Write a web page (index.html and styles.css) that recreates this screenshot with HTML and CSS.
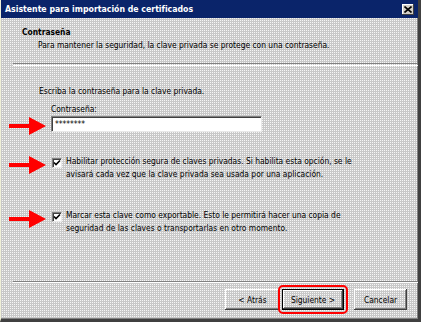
FILE: index.html
```html
<!DOCTYPE html>
<html lang="es">
<head>
    <meta charset="UTF-8">
    <title>Asistente para importación de certificados</title>
    <link rel="stylesheet" href="styles.css">
</head>
<body>
    <div class="window">
        <div class="titlebar">
            <span class="title">Asistente para importación de certificados</span>
            <span class="close">
                <svg width="8" height="7" viewBox="0 0 8 7"><path d="M0.5 0.5 L7.5 6.5 M7.5 0.5 L0.5 6.5" stroke="#000" stroke-width="1.6"/></svg>
            </span>
        </div>

        <div class="header">
            <div class="heading">Contraseña</div>
            <div class="subtitle">Para mantener la seguridad, la clave privada se protege con una contraseña.</div>
        </div>
        <div class="separator"></div>

        <div class="content">
            <p class="intro">Escriba la contraseña para la clave privada.</p>

            <label class="field-label" for="password">Contraseña:</label>
            <div class="row">
                <svg class="arrow" width="37" height="18" viewBox="0 0 37 18"><polygon points="0,7 20,7 20,0 37,9 20,18 20,11 0,11" fill="#f00"/></svg>
                <div class="input" id="password">********</div>
            </div>

            <div class="row option first">
                <svg class="arrow" width="37" height="18" viewBox="0 0 37 18"><polygon points="0,7 20,7 20,0 37,9 20,18 20,11 0,11" fill="#f00"/></svg>
                <span class="checkbox"><svg width="8" height="8" viewBox="0 0 8 8"><path d="M1 3.5 L3 5.5 L7 1.5" stroke="#000" stroke-width="1.6" fill="none"/></svg></span>
                <span class="option-text">Habilitar protección segura de claves privadas. Si habilita esta opción, se le avisará cada vez que la clave privada sea usada por una aplicación.</span>
            </div>

            <div class="row option second">
                <svg class="arrow" width="37" height="18" viewBox="0 0 37 18"><polygon points="0,7 20,7 20,0 37,9 20,18 20,11 0,11" fill="#f00"/></svg>
                <span class="checkbox"><svg width="8" height="8" viewBox="0 0 8 8"><path d="M1 3.5 L3 5.5 L7 1.5" stroke="#000" stroke-width="1.6" fill="none"/></svg></span>
                <span class="option-text">Marcar esta clave como exportable. Esto le permitirá hacer una copia de seguridad de las claves o transportarlas en otro momento.</span>
            </div>
        </div>

        <div class="footer">
            <button class="btn back">&lt; Atrás</button>
            <span class="highlight"><button class="btn next">Siguiente &gt;</button></span>
            <button class="btn cancel">Cancelar</button>
        </div>
    </div>
</body>
</html>
```

FILE: styles.css
```css
body {
    margin: 0;
    width: 421px;
    height: 322px;
    overflow: hidden;
    font-family: 'DejaVu Sans Condensed', 'DejaVu Sans', sans-serif;
    font-size: 8.4px;
    line-height: 13px;
    color: #000;
}
.window {
    box-sizing: border-box;
    width: 421px;
    height: 322px;
    display: flex;
    flex-direction: column;
    background-color: #c8c8c8;
    background-image: conic-gradient(from 90deg at 1px 1px, #c8c8c8 0 75%, #f6f6f6 0);
    background-size: 2px 2px;
    border-left: 1px solid #f0f0d8;
    border-right: 3px solid #404040;
    border-bottom: 3px solid #404040;
    box-shadow: inset -1px -1px 0 #808080;
}
.titlebar {
    height: 18px;
    flex: none;
    display: flex;
    align-items: center;
    justify-content: space-between;
    padding: 0 4px 0 4px;
    background: #0a246a;
    color: #fff;
}
.title {
    font-weight: bold;
    font-size: 8.7px;
}
.close {
    width: 12px;
    height: 11px;
    display: flex;
    align-items: center;
    justify-content: center;
    background: #d4d0c8;
    box-shadow: inset -1px -1px 0 #404040, inset 1px 1px 0 #fff;
}
.header {
    padding: 8px 0 0 21px;
    height: 37px;
    flex: none;
}
.heading {
    font-weight: bold;
}
.subtitle {
    padding-left: 16px;
}
.separator {
    height: 1px;
    margin-left: 12px;
    border-top: 1px solid #808080;
    border-bottom: 1px solid #fff;
    flex: none;
}
.content {
    flex: 1;
}
.intro {
    margin: 19px 0 0 38px;
}
.field-label {
    display: block;
    margin: 5px 0 1px 50px;
}
.row {
    display: flex;
    align-items: flex-start;
}
.arrow {
    margin-left: 8px;
    flex: none;
}
.input {
    box-sizing: border-box;
    width: 211px;
    height: 16px;
    margin-left: 5px;
    margin-top: -1px;
    padding: 2px 3px 0;
    line-height: 11px;
    background: #fff;
    border-top: 1px solid #808080;
    border-left: 1px solid #808080;
    border-right: 1px solid #e8e8e8;
    border-bottom: 1px solid #e8e8e8;
    box-shadow: inset 1px 1px 0 #404040;
}
.option {
    width: 362px;
}
.option.first {
    margin-top: 20px;
}
.option.second {
    margin-top: 28px;
}
.option .arrow {
    margin-top: 1px;
}
.checkbox {
    box-sizing: border-box;
    flex: none;
    width: 10px;
    height: 10px;
    margin: 3px 4px 0 6px;
    display: flex;
    align-items: center;
    justify-content: center;
    background: #fff;
    border-top: 1px solid #808080;
    border-left: 1px solid #808080;
    border-right: 1px solid #e8e8e8;
    border-bottom: 1px solid #e8e8e8;
    box-shadow: inset 1px 1px 0 #404040;
}
.option-text {
    flex: 1;
}
.footer {
    flex: none;
    height: 30px;
    margin-left: 12px;
    padding: 7px 11px 0 0;
    border-top: 1px solid #808080;
    box-shadow: inset 0 1px 0 #fff;
    display: flex;
    justify-content: flex-end;
    align-items: flex-start;
    gap: 2px;
}
.btn {
    box-sizing: border-box;
    height: 21px;
    padding: 0;
    font-family: inherit;
    font-size: 8.4px;
    color: #000;
    background: transparent;
    border: none;
    box-shadow: inset -1px -1px 0 #404040, inset 1px 1px 0 #fff, inset -2px -2px 0 #808080;
}
.back {
    width: 55px;
}
.next {
    width: 62px;
    box-shadow: inset 0 0 0 1px #000, inset -2px -2px 0 #404040, inset 2px 2px 0 #fff, inset -3px -3px 0 #808080;
}
.cancel {
    width: 53px;
    margin-left: 8px;
}
.highlight {
    display: flex;
    padding: 2px;
    margin: -4px -4px 0;
    border: 2px solid #f00;
    border-radius: 5px;
}
```
